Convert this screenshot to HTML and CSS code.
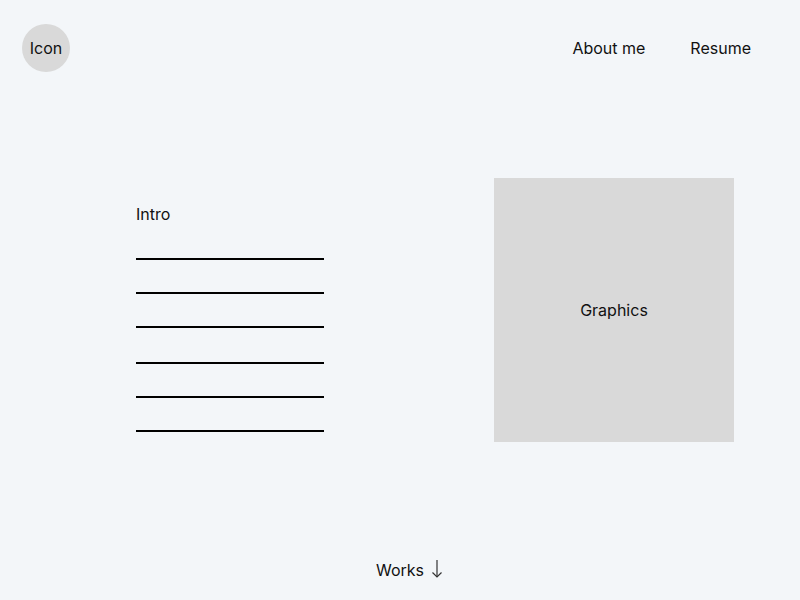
FILE: index.html
```html
<!DOCTYPE html>
<html lang="en">
<head>
  <meta charset="UTF-8">
  <meta name="viewport" content="width=device-width, initial-scale=1.0">
  <title>Portfolio</title>
  <link rel="stylesheet" href="styles.css">
</head>
<body>
  <div class="page">
    <header class="header">
      <div class="logo">Icon</div>
      <nav class="nav">
        <a href="#" class="nav-link">About me</a>
        <a href="#" class="nav-link">Resume</a>
      </nav>
    </header>

    <main class="hero">
      <div class="intro">
        <p class="intro-title">Intro</p>
        <div class="intro-line"></div>
        <div class="intro-line"></div>
        <div class="intro-line intro-line-gap"></div>
        <div class="intro-line"></div>
        <div class="intro-line"></div>
        <div class="intro-line"></div>
      </div>
      <div class="graphics">Graphics</div>
    </main>

    <footer class="footer">
      <a href="#" class="works-link">Works
        <svg class="arrow" width="12" height="20" viewBox="0 0 12 20" fill="none" stroke="currentColor" stroke-width="1.2">
          <path d="M6 1v17"/>
          <path d="M1.5 13.5L6 18l4.5-4.5"/>
        </svg>
      </a>
    </footer>
  </div>
</body>
</html>
```

FILE: styles.css
```css
body {
  font-family: Inter, 'Noto Sans', sans-serif;
  font-size: 16px;
  color: #111;
  background-color: #f3f6f9;
  margin: 0;
  padding: 0;
}
.page {
  display: flex;
  flex-direction: column;
  min-height: 100vh;
}
.header {
  display: flex;
  justify-content: space-between;
  align-items: center;
  padding: 24px 49px 0 22px;
}
.logo {
  width: 48px;
  height: 48px;
  border-radius: 50%;
  background-color: #d9d9d9;
  display: flex;
  justify-content: center;
  align-items: center;
}
.nav {
  display: flex;
  gap: 45px;
}
.nav-link {
  color: #111;
  text-decoration: none;
}
.hero {
  display: flex;
  align-items: flex-start;
  gap: 170px;
  padding: 106px 0 0 136px;
}
.intro {
  width: 188px;
  padding-top: 26px;
}
.intro-title {
  margin: 0 0 34px;
}
.intro-line {
  height: 2px;
  background-color: #000;
  margin-bottom: 32px;
}
.intro-line-gap {
  margin-bottom: 34px;
}
.graphics {
  width: 240px;
  height: 264px;
  background-color: #d9d9d9;
  display: flex;
  justify-content: center;
  align-items: center;
}
.footer {
  margin-top: auto;
  display: flex;
  justify-content: center;
  padding-bottom: 20px;
}
.works-link {
  position: relative;
  color: #111;
  text-decoration: none;
}
.arrow {
  position: absolute;
  left: 100%;
  top: -1px;
  margin-left: 7px;
  color: #333;
}
```
